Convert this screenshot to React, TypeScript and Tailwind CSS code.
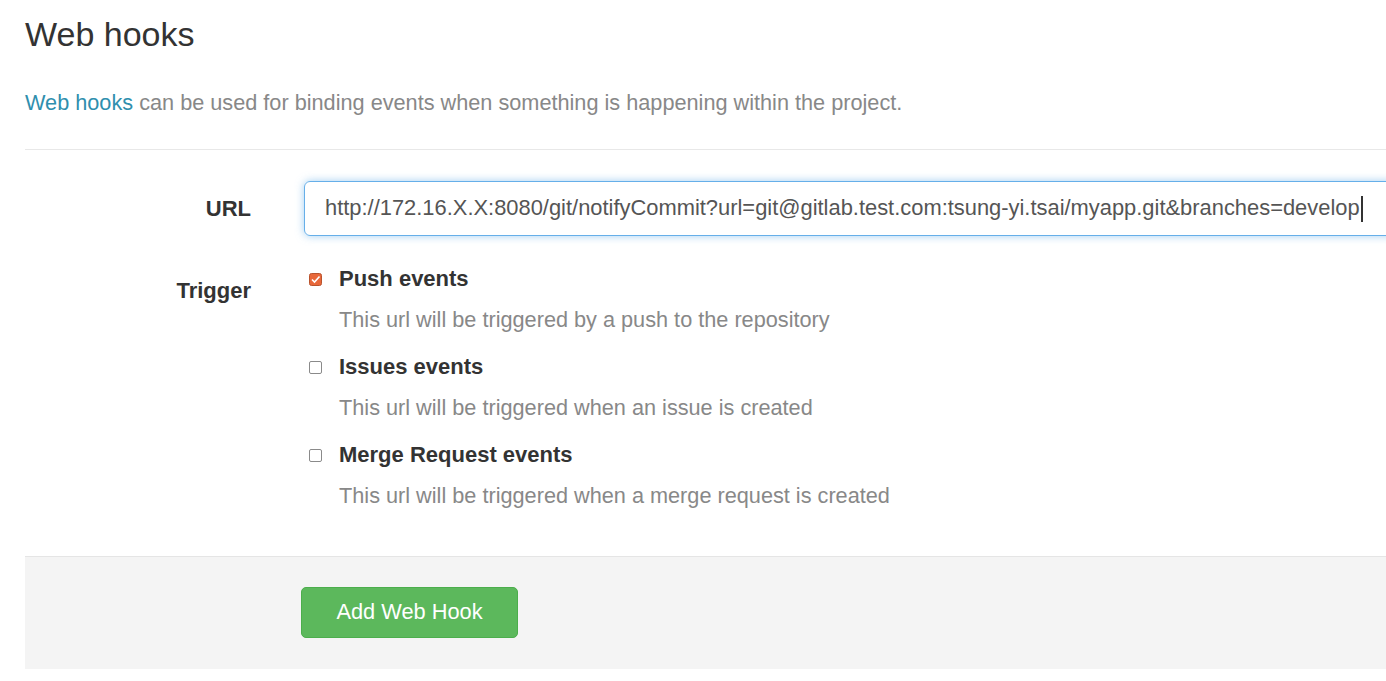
import React from "react";

const events = [
  {
    id: "push",
    label: "Push events",
    help: "This url will be triggered by a push to the repository",
    checked: true,
  },
  {
    id: "issues",
    label: "Issues events",
    help: "This url will be triggered when an issue is created",
    checked: false,
  },
  {
    id: "merge",
    label: "Merge Request events",
    help: "This url will be triggered when a merge request is created",
    checked: false,
  },
];

const Checkbox: React.FC<{ checked: boolean }> = ({ checked }) =>
  checked ? (
    <svg width="13" height="13" viewBox="0 0 13 13" className="shrink-0">
      <rect x="0.5" y="0.5" width="12" height="12" rx="2" fill="#e8683a" stroke="#b9532d" />
      <path d="M3 6.5 L5.5 9 L10.5 3.5" fill="none" stroke="#fff" strokeWidth="1.6" />
    </svg>
  ) : (
    <span className="block h-[13px] w-[13px] shrink-0 rounded-[2px] border border-[#8a8a8a] bg-white" />
  );

const App: React.FC = () => {
  return (
    <div className="min-h-[681px] overflow-hidden bg-white pl-[25px] font-['Liberation_Sans',Arial,sans-serif] text-[#333]">
      {/* header */}
      <h3 className="pt-[14px] text-[34px] leading-[40px] font-normal text-[#333]">Web hooks</h3>
      <p className="mt-[36px] text-[21.7px] leading-[26px] text-[#888]">
        <a className="text-[#2f8fae]">Web hooks</a> can be used for binding events when something is
        happening within the project.
      </p>

      <div className="mt-[33px] border-t border-[#e8e8e8]">
        {/* url */}
        <div className="mt-[31px] flex items-center">
          <label className="w-[226px] shrink-0 text-right text-[22px] font-bold text-[#333]">URL</label>
          <div className="ml-[53px] h-[55px] flex-1 -mr-[10px] flex items-center rounded-[6px] border border-[#66afe9] pl-[20px] text-[21.9px] text-[#555] shadow-[0_0_8px_rgba(102,175,233,0.6)]">
            <span className="whitespace-nowrap">
              http://172.16.X.X:8080/git/notifyCommit?url=git@gitlab.test.com:tsung-yi.tsai/myapp.git&amp;branches=develop
            </span>
            <span className="ml-[1px] h-[26px] w-[2px] bg-[#333]" />
          </div>
        </div>

        {/* trigger */}
        <div className="mt-[27px] flex">
          <label className="w-[226px] shrink-0 pt-[11px] text-right text-[22px] font-bold text-[#333]">
            Trigger
          </label>
          <div className="ml-[58px] flex flex-col pt-[2px]">
            {events.map((e) => (
              <div key={e.id} className="mb-[19px] flex flex-col">
                <div className="flex items-center">
                  <Checkbox checked={e.checked} />
                  <span className="ml-[17px] text-[22px] font-bold leading-[28px] text-[#333]">{e.label}</span>
                </div>
                <span className="ml-[30px] mt-[13px] text-[21.7px] leading-[28px] text-[#888]">{e.help}</span>
              </div>
            ))}
          </div>
        </div>

        {/* actions */}
        <div className="mt-[27px] border-t border-[#e5e5e5] bg-[#f4f4f4] pt-[30px] pb-[31px] pl-[276px]">
          <button className="h-[51px] w-[217px] rounded-[5px] border border-[#4cae4c] bg-[#5cb85c] text-[21.8px] text-white">
            Add Web Hook
          </button>
        </div>
      </div>
    </div>
  );
};

export default App;
